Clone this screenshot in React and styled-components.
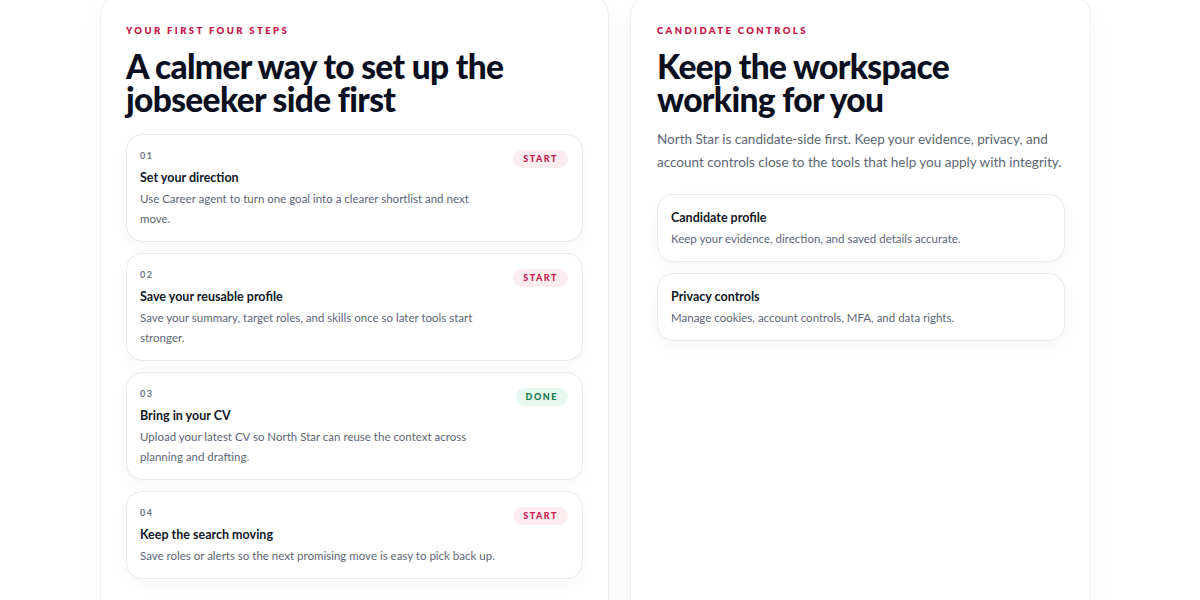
import styled, { createGlobalStyle } from 'styled-components'

const GlobalStyle = createGlobalStyle`
  * {
    box-sizing: border-box;
  }

  body {
    margin: 0;
    background: #ffffff;
    font-family: Lato, 'Noto Sans', sans-serif;
    color: #0f172a;
    overflow: hidden;
  }
`

const steps = [
  {
    num: '01',
    title: 'Set your direction',
    text: 'Use Career agent to turn one goal into a clearer shortlist and next move.',
    status: 'start',
  },
  {
    num: '02',
    title: 'Save your reusable profile',
    text: 'Save your summary, target roles, and skills once so later tools start stronger.',
    status: 'start',
  },
  {
    num: '03',
    title: 'Bring in your CV',
    text: 'Upload your latest CV so North Star can reuse the context across planning and drafting.',
    status: 'done',
  },
  {
    num: '04',
    title: 'Keep the search moving',
    text: 'Save roles or alerts so the next promising move is easy to pick back up.',
    status: 'start',
  },
]

const controls = [
  {
    title: 'Candidate profile',
    text: 'Keep your evidence, direction, and saved details accurate.',
  },
  {
    title: 'Privacy controls',
    text: 'Manage cookies, account controls, MFA, and data rights.',
  },
]

const App = () => {
  return (
    <>
      <GlobalStyle />
      <Page>
        <Panel $padLeft={25}>
          <Eyebrow>Your first four steps</Eyebrow>
          <Heading>A calmer way to set up the jobseeker side first</Heading>
          <StepList>
            {steps.map((step) => (
              <StepCard key={step.num}>
                <StepBody>
                  <StepNum>{step.num}</StepNum>
                  <CardTitle>{step.title}</CardTitle>
                  <StepText>{step.text}</StepText>
                </StepBody>
                <Badge $done={step.status === 'done'}>
                  {step.status === 'done' ? 'Done' : 'Start'}
                </Badge>
              </StepCard>
            ))}
          </StepList>
        </Panel>

        <Panel $padLeft={26}>
          <Eyebrow>Candidate controls</Eyebrow>
          <Heading>Keep the workspace working for you</Heading>
          <Lead>
            North Star is candidate-side first. Keep your evidence, privacy, and
            account controls close to the tools that help you apply with integrity.
          </Lead>
          <ControlList>
            {controls.map((item) => (
              <ControlCard key={item.title}>
                <CardTitle>{item.title}</CardTitle>
                <ControlText>{item.text}</ControlText>
              </ControlCard>
            ))}
          </ControlList>
        </Panel>
      </Page>
    </>
  )
}

export default App

const Page = styled.main`
  display: grid;
  grid-template-columns: 509px 461px;
  gap: 21px;
  margin: -8px 0 0 100px;
  height: 640px;
`

const Panel = styled.section`
  background: #ffffff;
  border: 1px solid #eef0f4;
  border-radius: 24px;
  padding: 31px 25px 31px ${(p) => p.$padLeft}px;
  box-shadow: 0 10px 30px rgba(15, 23, 42, 0.03);
`

const Eyebrow = styled.div`
  font-size: 9.5px;
  font-weight: 800;
  letter-spacing: 0.25em;
  text-transform: uppercase;
  color: #c8184a;
  line-height: 14px;
`

const Heading = styled.h2`
  margin: 12px 0 0;
  font-size: 33.5px;
  line-height: 33px;
  font-weight: 900;
  letter-spacing: -0.02em;
  color: #0a0f1f;
  max-width: 400px;
`

const StepList = styled.div`
  display: flex;
  flex-direction: column;
  gap: 11px;
  margin-top: 18px;
`

const StepCard = styled.article`
  display: flex;
  align-items: flex-start;
  gap: 8px;
  padding: 14px 14px 12px 13px;
  border: 1px solid #e8ebf0;
  border-radius: 16px;
  background: #ffffff;
  box-shadow: 0 6px 18px rgba(15, 23, 42, 0.03);
`

const StepBody = styled.div`
  flex: 1;
  max-width: 358px;
`

const StepNum = styled.div`
  font-size: 9px;
  font-weight: 700;
  letter-spacing: 0.18em;
  color: #6b7280;
  line-height: 14px;
`

const CardTitle = styled.h3`
  margin: 6px 0 2px;
  font-size: 12.5px;
  font-weight: 700;
  line-height: 18px;
  color: #111827;
`

const StepText = styled.p`
  margin: 0;
  font-size: 11.5px;
  line-height: 20px;
  color: #5d6677;
`

const Badge = styled.span`
  margin-left: auto;
  margin-top: 1px;
  padding: 0 10px;
  height: 18px;
  line-height: 18px;
  border-radius: 999px;
  font-size: 9px;
  font-weight: 900;
  letter-spacing: 0.17em;
  text-transform: uppercase;
  background: ${(p) => (p.$done ? '#e8f8ef' : '#fdedf1')};
  color: ${(p) => (p.$done ? '#157a4a' : '#c8184a')};
`

const Lead = styled.p`
  margin: 12px 0 0;
  font-size: 13.5px;
  line-height: 23px;
  color: #5d6677;
`

const ControlList = styled.div`
  display: flex;
  flex-direction: column;
  gap: 11px;
  margin-top: 20px;
`

const ControlCard = styled.article`
  padding: 14px 14px 12px 13px;
  border: 1px solid #e8ebf0;
  border-radius: 16px;
  background: #ffffff;
  box-shadow: 0 6px 18px rgba(15, 23, 42, 0.035);

  h3 {
    margin-top: 0;
  }
`

const ControlText = styled.p`
  margin: 0;
  font-size: 11.5px;
  line-height: 20px;
  color: #5d6677;
`
